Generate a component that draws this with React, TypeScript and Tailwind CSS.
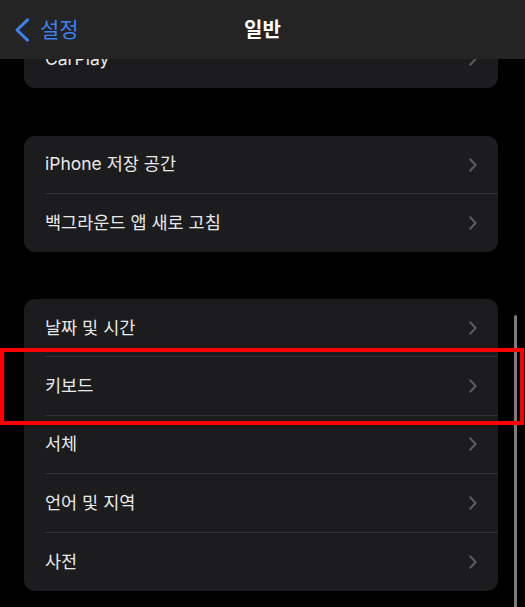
const groups: { rows: string[]; h: string }[] = [
  { rows: ["CarPlay"], h: "h-[58px]" },
  { rows: ["iPhone 저장 공간", "백그라운드 앱 새로 고침"], h: "h-[58px]" },
  { rows: ["날짜 및 시간", "키보드", "서체", "언어 및 지역", "사전"], h: "h-[58.4px]" },
];

function Chevron() {
  return (
    <svg width="8" height="14" viewBox="0 0 8 14" fill="none" className="shrink-0">
      <path d="M1.2 1.2L6.6 7L1.2 12.8" stroke="#5c5c60" strokeWidth="2" strokeLinecap="round" strokeLinejoin="round" />
    </svg>
  );
}

function Row({ label, last, h }: { label: string; last: boolean; h: string }) {
  return (
    <div className={"flex pl-[21px] " + h}>
      <div
        className={
          "flex flex-1 items-center justify-between pr-[21px] " +
          (last ? "" : "border-b border-[#313133]")
        }
      >
        <span className="text-[17.5px] text-[#e8e8e8]">{label}</span>
        <Chevron />
      </div>
    </div>
  );
}

export default function App() {
  return (
    <div
      className="relative h-[607px] w-[525px] overflow-hidden bg-black"
      style={{ fontFamily: 'Inter, "Noto Sans CJK KR", sans-serif' }}
    >
      <div className="flex flex-col px-[24px] pr-[27px] pt-[30px]">
        {groups.map((g, i) => (
          <div
            key={i}
            className={
              "overflow-hidden rounded-[11px] bg-[#1c1c1e] " +
              (i === 1 ? "mt-[48px]" : i === 2 ? "mt-[47px]" : "")
            }
          >
            {g.rows.map((r, j) => (
              <Row key={r} label={r} h={g.h} last={j === g.rows.length - 1} />
            ))}
          </div>
        ))}
      </div>

      {/* nav bar */}
      <div className="absolute inset-x-0 top-0 flex h-[59px] items-center bg-[#242424]">
        <div className="flex items-center gap-[10px] pl-[14px] text-[21px] text-[#3b82f0]">
          <svg width="16" height="24" viewBox="0 0 16 24" fill="none">
            <path d="M13.5 1.8L3 12L13.5 22.2" stroke="#3b82f0" strokeWidth="3" strokeLinecap="round" strokeLinejoin="round" />
          </svg>
          <span>설정</span>
        </div>
        <span className="absolute left-1/2 -translate-x-1/2 text-[20px] font-semibold text-white">일반</span>
      </div>

      {/* scroll indicator */}
      <div className="absolute left-[514px] top-[315px] h-[300px] w-[3px] rounded-full bg-[#7c7c80]" />

      {/* highlight */}
      <div className="absolute left-0 top-[348px] h-[77px] w-[524px] border-4 border-[#ff0000]" />
    </div>
  );
}
